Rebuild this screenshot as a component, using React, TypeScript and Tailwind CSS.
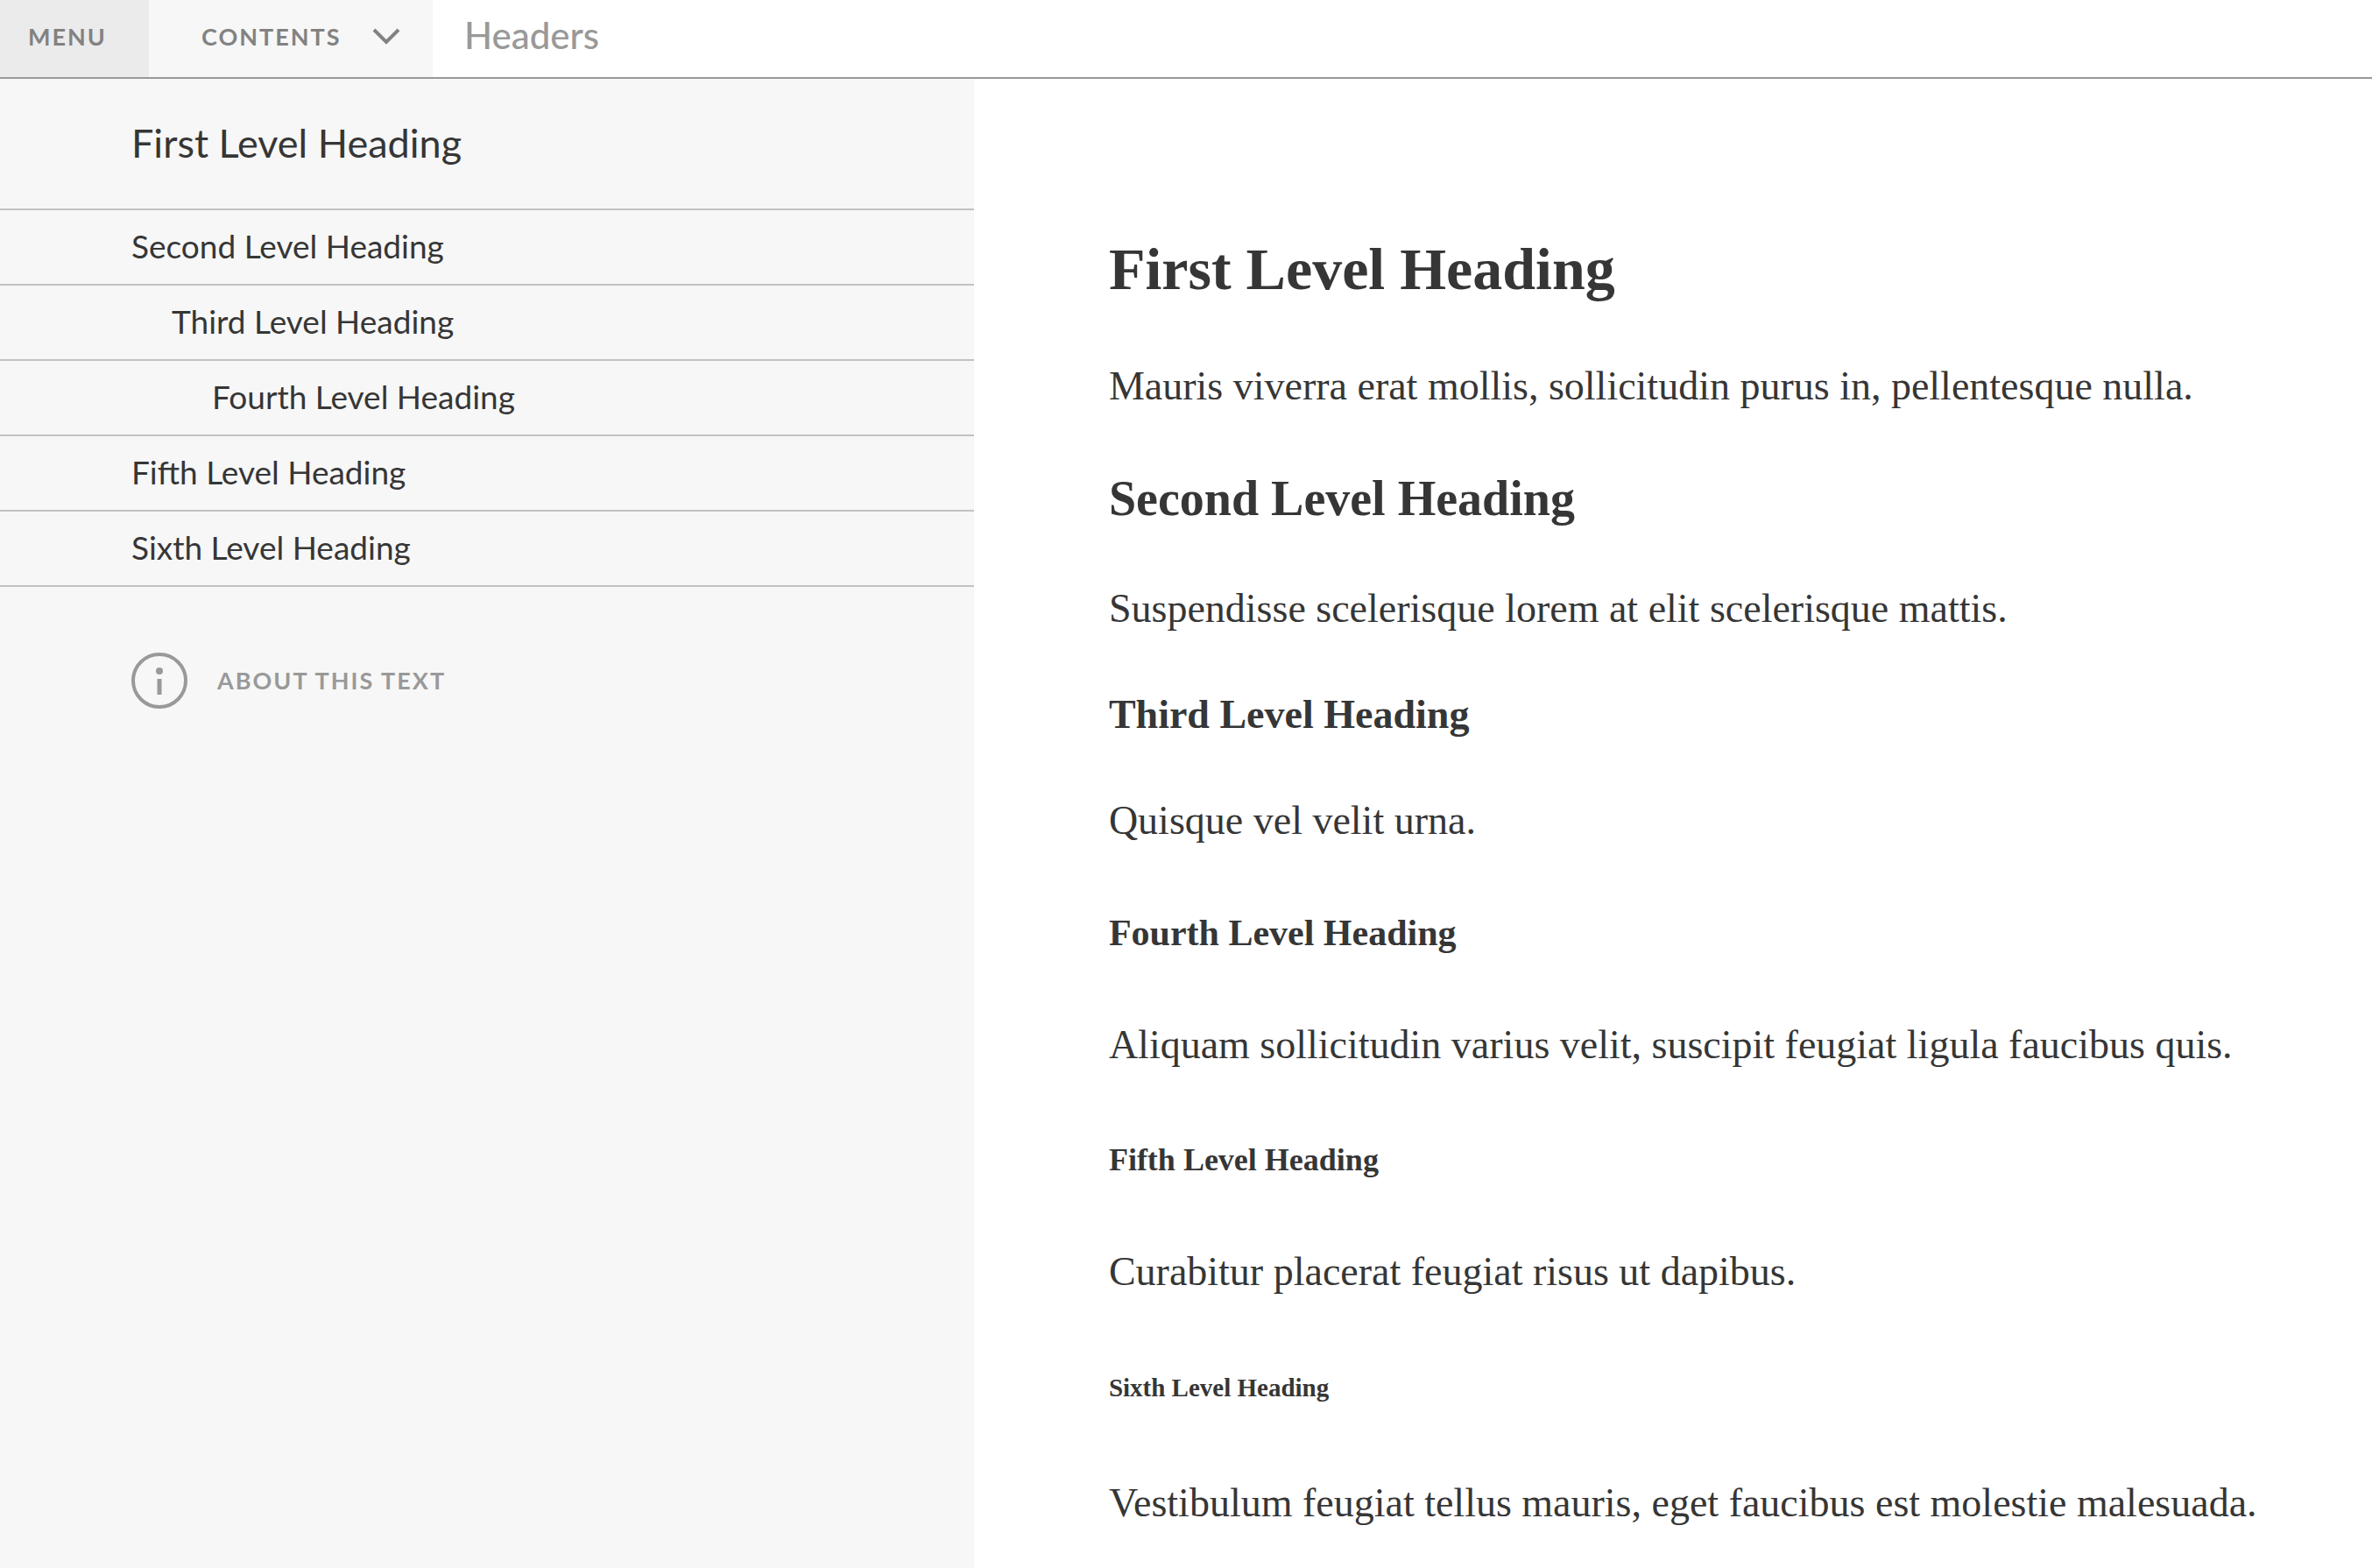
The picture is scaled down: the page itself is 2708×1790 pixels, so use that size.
const toc = [
  { label: "Second Level Heading", indent: "pl-[150px]" },
  { label: "Third Level Heading", indent: "pl-[196px]" },
  { label: "Fourth Level Heading", indent: "pl-[242px]" },
  { label: "Fifth Level Heading", indent: "pl-[150px]" },
  { label: "Sixth Level Heading", indent: "pl-[150px]" },
];

const heading = "font-bold leading-[64px]";
const para = "text-[46px] leading-[64px]";
const caps = "text-[27px] font-bold tracking-[2px]";

export default function App() {
  return (
    <div className="flex min-h-screen flex-col bg-white font-['Lato',sans-serif] text-[#363636]">
      <header className="flex h-[90px] border-b-2 border-[#999999]">
        <button className={`${caps} w-[170px] bg-[#ebebeb] pb-1 pl-8 text-left text-[#828282]`}>
          MENU
        </button>
        <button className={`${caps} flex w-[324px] items-center justify-between bg-[#f7f7f7] pb-1 pl-[60px] pr-[37px] text-[#828282]`}>
          CONTENTS
          <svg width="32" height="20" viewBox="0 0 32 20" fill="none" stroke="currentColor" strokeWidth="4">
            <path d="M2 2l14 14L30 2" />
          </svg>
        </button>
        <div className="flex items-center pb-2 pl-9 text-[42px] font-medium text-[#999999]">Headers</div>
      </header>
      <div className="flex flex-1">
        <nav className="w-[41.06%] shrink-0 bg-[#f7f7f7]">
          <a href="#h1" className="flex h-[150px] items-center border-b-2 border-[#c2c2c2] pl-[150px] text-[45px]">
            First Level Heading
          </a>
          {toc.map((t) => (
            <a
              key={t.label}
              href="#section"
              className={`flex h-[86px] items-center border-b-2 border-[#c2c2c2] pb-[2px] text-[37px] ${t.indent}`}
            >
              {t.label}
            </a>
          ))}
          <button className={`${caps} mt-[75px] ml-[150px] flex items-center gap-[34px] text-[#999999]`}>
            <svg width="64" height="64" viewBox="0 0 64 64" fill="none">
              <circle cx="32" cy="32" r="30" stroke="currentColor" strokeWidth="4" />
              <circle cx="32" cy="21" r="4" fill="currentColor" />
              <path d="M32 30v18" stroke="currentColor" strokeWidth="5" />
            </svg>
            ABOUT THIS TEXT
          </button>
        </nav>
        <main className="flex-1 pt-[185px] pl-[154px] font-['Liberation_Serif',serif]">
          <h1 id="h1" className={`${heading} text-[68px]`}>First Level Heading</h1>
          <p className={`${para} mt-[70px]`}>Mauris viverra erat mollis, sollicitudin purus in, pellentesque nulla.</p>
          <h2 className={`${heading} mt-16 text-[56px]`}>Second Level Heading</h2>
          <p className={`${para} mt-[62px]`}>Suspendisse scelerisque lorem at elit scelerisque mattis.</p>
          <h3 className={`${heading} mt-[57px] text-[46px]`}>Third Level Heading</h3>
          <p className={`${para} mt-[57px]`}>Quisque vel velit urna.</p>
          <h4 className={`${heading} mt-16 text-[42px]`}>Fourth Level Heading</h4>
          <p className={`${para} mt-16`}>Aliquam sollicitudin varius velit, suscipit feugiat ligula faucibus quis.</p>
          <h5 className={`${heading} mt-[67px] text-[36px]`}>Fifth Level Heading</h5>
          <p className={`${para} mt-16`}>Curabitur placerat feugiat risus ut dapibus.</p>
          <h6 className={`${heading} mt-[68px] text-[29px]`}>Sixth Level Heading</h6>
          <p className={`${para} mt-[68px]`}>Vestibulum feugiat tellus mauris, eget faucibus est molestie malesuada.</p>
        </main>
      </div>
    </div>
  );
}
